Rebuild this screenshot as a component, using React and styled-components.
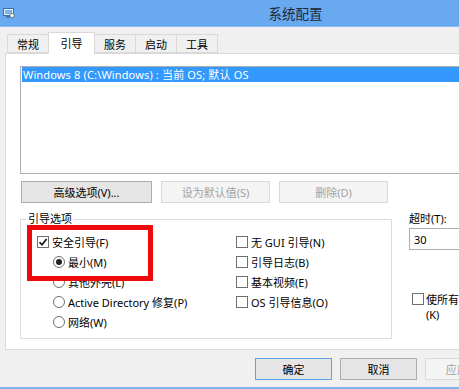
import React from "react";
import styled, { createGlobalStyle } from "styled-components";

const Global = createGlobalStyle`
  html, body { margin: 0; padding: 0; overflow: hidden; background: #f0f0f0; }
  body {
    font-family: "Noto Sans", "Noto Sans CJK SC", sans-serif;
    font-size: 11px;
    color: #000;
  }
  * { box-sizing: border-box; }
`;

const Window = styled.div`
  width: 588px;
  height: 389px;
  display: flex;
  flex-direction: column;
  background: #f0f0f0;
  border-bottom: 2px solid #7fb6ee;
`;

const TitleBar = styled.div`
  flex: none;
  height: 27px;
  background: #68a9ef;
  border-bottom: 1px solid #86bcf2;
  display: grid;
  grid-template-columns: 1fr auto 1fr;
  align-items: center;
  padding-left: 3px;
`;

const Title = styled.div`
  font-family: "Noto Sans CJK SC", sans-serif;
  font-size: 13.5px;
  color: #1e2833;
`;

const Body = styled.div`
  flex: 1;
  display: flex;
  flex-direction: column;
  padding: 5px 5px 0;
`;

const TabRow = styled.div`
  display: flex;
  align-items: flex-end;
  height: 22px;
  margin-left: 2px;
  margin-bottom: -1px;
  position: relative;
  z-index: 1;
`;

const Tab = styled.div`
  width: ${(p) => (p.$active ? 47 : 42)}px;
  height: ${(p) => (p.$active ? 22 : 19)}px;
  margin-bottom: ${(p) => (p.$active ? 0 : 1)}px;
  margin-left: ${(p) => (p.$first ? 0 : -1)}px;
  padding-bottom: ${(p) => (p.$active ? 2 : 0)}px;
  border: 1px solid #d9d9d9;
  border-bottom: ${(p) => (p.$active ? "none" : "1px solid #d9d9d9")};
  background: ${(p) => (p.$active ? "#fff" : "#f0f0f0")};
  display: flex;
  align-items: center;
  justify-content: center;
  position: relative;
  z-index: ${(p) => (p.$active ? 2 : 1)};
`;

const Panel = styled.div`
  height: 297px;
  background: #fff;
  border: 1px solid #d9d9d9;
  padding: 12px 13px 0 14px;
  display: flex;
  flex-direction: column;
`;

const ListBox = styled.div`
  height: 108px;
  border: 1px solid #abadb3;
  padding: 0 1px;
`;

const ListItem = styled.div`
  height: 15px;
  line-height: 15px;
  padding-left: 1px;
  background: ${(p) => (p.$selected ? "#3399ff" : "transparent")};
  color: ${(p) => (p.$selected ? "#fff" : "#000")};
  white-space: nowrap;
  letter-spacing: 0.15px;
`;

const ButtonRow = styled.div`
  display: flex;
  gap: ${(p) => p.$gap || 9}px;
  margin-top: ${(p) => p.$top || 0}px;
  padding-left: ${(p) => p.$left || 0}px;
`;

const Button = styled.button`
  flex: none;
  width: ${(p) => p.$w}px;
  height: 22px;
  padding: 0;
  font: inherit;
  white-space: nowrap;
  border: 1px solid ${(p) => (p.$default ? "#5ea2e6" : p.disabled ? "#d9d9d9" : "#adadad")};
  background: ${(p) => (p.disabled ? "#f4f4f4" : "#e5e5e5")};
  color: ${(p) => (p.disabled ? "#a2a2a2" : "#000")};
`;

const OptionsArea = styled.div`
  display: flex;
  align-items: flex-start;
  margin-top: 8px;
`;

const GroupBox = styled.fieldset`
  flex: none;
  width: 372px;
  margin: 0;
  padding: 0;
  min-width: 0;
  border: 1px solid #dcdcdc;
`;

const Legend = styled.legend`
  margin-left: 5px;
  padding: 0 2px;
  line-height: 16px;
`;

const GroupGrid = styled.div`
  position: relative;
  display: grid;
  grid-template-columns: 199px 1fr;
  padding: 5px 0 6px 16px;
`;

const Column = styled.div`
  display: flex;
  flex-direction: column;
`;

const OptionRow = styled.label`
  display: flex;
  align-items: center;
  gap: 3px;
  height: 20px;
  padding-left: ${(p) => p.$indent || 0}px;
  white-space: nowrap;
`;

const CheckBoxBox = styled.span`
  flex: none;
  width: 12px;
  height: 12px;
  border: 1px solid #707070;
  background: #fff;
  display: flex;
  align-items: center;
  justify-content: center;
`;

const RadioCircle = styled.span`
  flex: none;
  width: 12px;
  height: 12px;
  border: 1px solid #707070;
  border-radius: 50%;
  background: #fff;
  display: flex;
  align-items: center;
  justify-content: center;
  &::after {
    content: "";
    width: 6px;
    height: 6px;
    border-radius: 50%;
    background: ${(p) => (p.$checked ? "#222" : "transparent")};
  }
`;

const Highlight = styled.div`
  position: absolute;
  left: 6px;
  top: -2px;
  width: 126px;
  height: 56px;
  border: 5px solid #ee0a0a;
  pointer-events: none;
`;

const TimeoutCol = styled.div`
  flex: none;
  margin-left: 17px;
  display: flex;
  flex-direction: column;
`;

const FieldLabel = styled.div`
  line-height: 16px;
`;

const TextInput = styled.div`
  margin-top: 1px;
  width: 160px;
  height: 22px;
  border: 1px solid #abadb3;
  background: #fff;
  padding-left: 4px;
  display: flex;
  align-items: center;
`;

const PermanentRow = styled.label`
  margin-top: 42px;
  margin-left: 3px;
  display: flex;
  align-items: flex-start;
  gap: 2px;
`;

const PermanentBox = styled(CheckBoxBox)`
  margin-top: 1px;
`;

const WrapText = styled.span`
  width: 148px;
  line-height: 15px;
`;

const Footer = styled.div`
  display: flex;
  gap: 8px;
  margin-top: 8px;
  padding-left: 250px;
`;

function CheckBox({ checked, children, indent }) {
  return (
    <OptionRow $indent={indent}>
      <CheckBoxBox>
        {checked && (
          <svg width="10" height="10" viewBox="0 0 10 10">
            <path d="M1.5 5.2 L4 7.8 L8.6 2" fill="none" stroke="#111" strokeWidth="1.6" />
          </svg>
        )}
      </CheckBoxBox>
      <span>{children}</span>
    </OptionRow>
  );
}

function Radio({ checked, children, indent }) {
  return (
    <OptionRow $indent={indent}>
      <RadioCircle $checked={checked} />
      <span>{children}</span>
    </OptionRow>
  );
}

function AppIcon() {
  return (
    <svg width="12" height="12" viewBox="0 0 12 12">
      <rect x="0.5" y="1.5" width="10" height="7" fill="#dfefff" stroke="#3b6fb0" />
      <rect x="2" y="3" width="7" height="4" fill="#7fb6ea" />
      <rect x="3" y="9" width="5" height="1.5" fill="#3b6fb0" />
      <circle cx="9" cy="8.5" r="2.2" fill="#f4f4f4" stroke="#666" strokeWidth="0.8" />
    </svg>
  );
}

const tabs = ["常规", "引导", "服务", "启动", "工具"];

export default function App() {
  return (
    <>
      <Global />
      <Window>
        <TitleBar>
          <AppIcon />
          <Title>系统配置</Title>
          <span />
        </TitleBar>
        <Body>
          <TabRow>
            {tabs.map((t, i) => (
              <Tab key={t} $active={i === 1} $first={i === 0}>
                {t}
              </Tab>
            ))}
          </TabRow>
          <Panel>
            <ListBox>
              <ListItem $selected>Windows 8 (C:\Windows) : 当前 OS; 默认 OS</ListItem>
            </ListBox>
            <ButtonRow $top={7} $left={1}>
              <Button $w={131}>高级选项(V)...</Button>
              <Button $w={109} disabled>设为默认值(S)</Button>
              <Button $w={109} disabled>删除(D)</Button>
            </ButtonRow>
            <OptionsArea>
              <GroupBox>
                <Legend>引导选项</Legend>
                <GroupGrid>
                  <Column>
                    <CheckBox checked>安全引导(F)</CheckBox>
                    <Radio checked indent={16}>最小(M)</Radio>
                    <Radio indent={16}>其他外壳(L)</Radio>
                    <Radio indent={16}>Active Directory 修复(P)</Radio>
                    <Radio indent={16}>网络(W)</Radio>
                  </Column>
                  <Column>
                    <CheckBox>无 GUI 引导(N)</CheckBox>
                    <CheckBox>引导日志(B)</CheckBox>
                    <CheckBox>基本视频(E)</CheckBox>
                    <CheckBox>OS 引导信息(O)</CheckBox>
                  </Column>
                  <Highlight />
                </GroupGrid>
              </GroupBox>
              <TimeoutCol>
                <FieldLabel>超时(T):</FieldLabel>
                <TextInput>30</TextInput>
                <PermanentRow>
                  <PermanentBox />
                  <WrapText>使所有引导设置成为永久设置(K)</WrapText>
                </PermanentRow>
              </TimeoutCol>
            </OptionsArea>
          </Panel>
          <Footer>
            <Button $w={77} $default>确定</Button>
            <Button $w={77}>取消</Button>
            <Button $w={77} disabled>应用(A)</Button>
            <Button $w={77}>帮助</Button>
          </Footer>
        </Body>
      </Window>
    </>
  );
}
